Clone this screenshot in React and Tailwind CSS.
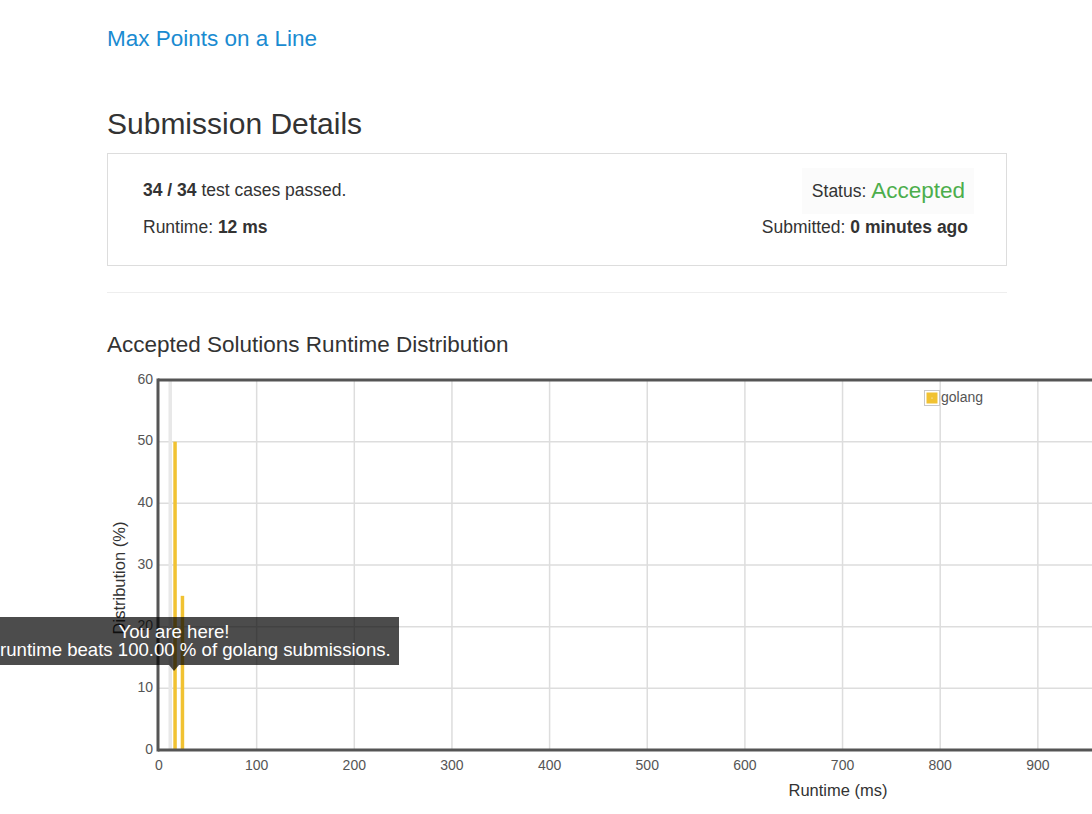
import React from 'react';

const font = { fontFamily: '"Liberation Sans", Arial, sans-serif' };

// chart geometry (svg coords, origin at container left / chart top)
const X0 = 52;
const XS = 0.9765;
const YTOP = 9;
const YBOT = 379;
const xv = (v) => X0 + v * XS;
const yv = (v) => YBOT - v * ((YBOT - YTOP) / 60);

function RuntimeChart() {
    const yTicks = [0, 10, 20, 30, 40, 50, 60];
    const xTicks = [0, 100, 200, 300, 400, 500, 600, 700, 800, 900, 1000];

    return (
        <svg width="1000" height="440" className="block overflow-visible">
            {/* grid */}
            {yTicks.slice(1, -1).map((t) => (
                <line key={'gy' + t} x1={51} x2={1000} y1={yv(t)} y2={yv(t)} stroke="#dddddd" strokeWidth="1.5" />
            ))}
            {xTicks.slice(1).map((t) => (
                <line key={'gx' + t} x1={xv(t)} x2={xv(t)} y1={YTOP} y2={YBOT} stroke="#dddddd" strokeWidth="1.5" />
            ))}

            {/* your runtime marker */}
            <rect x={61.5} y={YTOP + 1} width={3.5} height={YBOT - YTOP - 1} fill="#e8e8e8" />

            {/* bars */}
            <rect x={66.3} y={yv(50)} width={3.5} height={YBOT - yv(50)} fill="#f1c232" />
            <rect x={73.7} y={yv(25)} width={3.5} height={YBOT - yv(25)} fill="#f1c232" />

            {/* axes */}
            <line x1={51} x2={1000} y1={YTOP} y2={YTOP} stroke="#555555" strokeWidth="3" />
            <line x1={51} x2={1000} y1={YBOT} y2={YBOT} stroke="#555555" strokeWidth="3" />
            <line x1={51} x2={51} y1={YTOP - 1.5} y2={YBOT + 1.5} stroke="#555555" strokeWidth="3" />

            {/* tick labels */}
            {yTicks.map((t) => (
                <text key={'ly' + t} x={46} y={yv(t)} textAnchor="end" dominantBaseline="middle" fontSize="14" fill="#555555" style={font}>
                    {t}
                </text>
            ))}
            {xTicks.map((t) => (
                <text key={'lx' + t} x={xv(t)} y={395} textAnchor="middle" dominantBaseline="middle" fontSize="14" fill="#555555" style={font}>
                    {t}
                </text>
            ))}

            {/* axis titles */}
            <text x={731} y={421} textAnchor="middle" dominantBaseline="middle" fontSize="16.5" fill="#333333" style={font}>
                Runtime (ms)
            </text>
            <text
                x={14}
                y={207}
                textAnchor="middle"
                dominantBaseline="middle"
                fontSize="16.5"
                fill="#333333"
                transform="rotate(-90 14 207)"
                style={font}
            >
                Distribution (%)
            </text>

            {/* legend */}
            <rect x={817.5} y={19.5} width={15} height={15} fill="#ffffff" stroke="#c8c8c8" strokeWidth="1" />
            <rect x={819.5} y={21.5} width={11} height={11} fill="#f1c232" />
            <circle cx={825} cy={27} r={0.6} fill="#ffffff" />
            <text x={834} y={27} dominantBaseline="middle" fontSize="14" fill="#555555" style={font}>
                golang
            </text>
        </svg>
    );
}

export default function App() {
    return (
        <div className="w-full overflow-hidden bg-white min-h-[814px]" style={font}>
            <div className="w-[900px] ml-[107px] pt-[22px] text-[#333333]">
                {/* Problem link */}
                <a href="#" className="block text-[22.5px] leading-[33px] text-[#1a8bd1] w-fit">
                    Max Points on a Line
                </a>

                {/* Heading */}
                <h1 className="mt-[51px] text-[30px] leading-[36px] font-normal">Submission Details</h1>

                {/* Summary panel */}
                <div className="mt-[11px] h-[113px] border border-[#dddddd] flex justify-between pl-[35px] pr-[38px]">
                    <div className="pt-[24px] text-[17.5px]">
                        <div className="leading-[24px]">
                            <b>34 / 34</b> test cases passed.
                        </div>
                        <div className="mt-[13px] leading-[24px]">
                            Runtime: <b>12 ms</b>
                        </div>
                    </div>
                    <div className="pt-[14px] flex flex-col items-end text-[17.5px]">
                        <div className="h-[46px] flex items-center bg-[#fbfbfb] pl-[10px] pr-[9px] -mr-[6px]">
                            Status:&nbsp;<span className="text-[22.5px] text-[#4cae4c]">Accepted</span>
                        </div>
                        <div className="mt-[1px] leading-[24px]">
                            Submitted: <b>0 minutes ago</b>
                        </div>
                    </div>
                </div>

                <hr className="mt-[26px] border-0 border-t border-[#eeeeee]" />

                <h3 className="mt-[37px] text-[22.5px] leading-[30px] font-normal">Accepted Solutions Runtime Distribution</h3>

                {/* Chart */}
                <div className="relative mt-[11px] h-[440px]">
                    <RuntimeChart />

                    {/* tooltip */}
                    <div className="absolute left-[-158px] top-[246px] w-[450px] h-[48px] bg-black/70 text-white text-[18.6px] leading-[18px] flex flex-col items-center justify-center">
                        <div>You are here!</div>
                        <div className="whitespace-nowrap">Your runtime beats 100.00 % of golang submissions.</div>
                        <div className="absolute left-[220px] top-[48px] w-0 h-0 border-l-[5px] border-r-[5px] border-t-[6px] border-l-transparent border-r-transparent border-t-black/70" />
                    </div>
                </div>
            </div>
        </div>
    );
}
